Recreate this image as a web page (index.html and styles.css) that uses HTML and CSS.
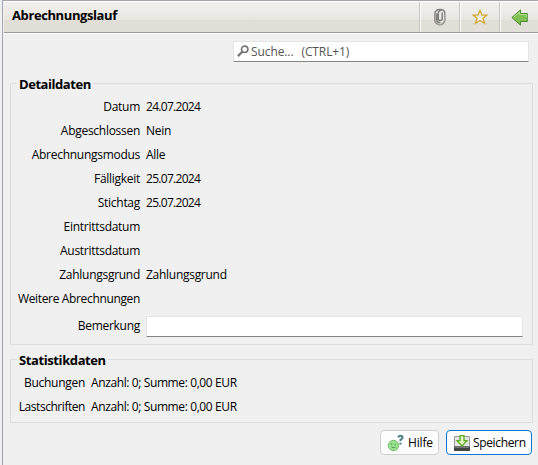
FILE: index.html
```html
<!DOCTYPE html>
<html lang="de">
<head>
<meta charset="utf-8">
<title>Abrechnungslauf</title>
<link rel="stylesheet" href="styles.css">
</head>
<body>
<main class="view">
  <header class="titlebar">
    <h1>Abrechnungslauf</h1>
    <button class="tool" aria-label="Anhang"><svg width="14" height="18" viewBox="0 0 14 18"><g fill="none" stroke-linecap="round"><path d="M9.200 5V10.500a2 2 0 0 1-4 0V6.500M5.200 11.500V5.500a3 3 0 0 1 3-3.200M3.500 2.600Q1.800 3.500 1.800 6v5.500a5 5 0 0 0 10 .5V5.500A4 4 0 0 0 8 1.500H6Q4.500 1.500 3.500 2.600M3.700 6v5.500a3 3 0 0 0 3 3" stroke="#80807c" stroke-width="1.500"/><path d="M2 6v5.500a4.800 4.800 0 0 0 9.600.5V5.500" stroke="#b7b7b2" stroke-width=".6"/></g></svg></button>
    <button class="tool" aria-label="Favorit"><svg width="16" height="16" viewBox="0 0 16 16"><path d="M8 1.500 9.900 6.100h4.900l-3.900 3.300 1.800 5L8 11.500l-4.700 2.900 1.800-5-3.900-3.300h4.900z" fill="#f1eeea" stroke="#d0aa36" stroke-width="1.300"/></svg></button>
    <button class="tool back" aria-label="Zurück"><svg width="17" height="17" viewBox="0 0 17 17"><path d="M.8 8.500 9.500.900V4.500h6.800v8H9.500v3.600z" fill="#80c050" stroke="#4b8b31"/><path d="M2.500 8.300 8.500 3.100V5.500h6.800v3" fill="none" stroke="#b7e095"/></svg></button>
  </header>
  <div class="search">
    <svg width="12" height="13" viewBox="0 0 12 13"><circle cx="7.700" cy="4.300" r="3.200" fill="none" stroke="#777" stroke-width="1.600"/><path d="M5.300 6.800.9 11.100" stroke="#777" stroke-width="2.300"/></svg>
    <span class="s1">Suche...</span><span class="s2">(CTRL+1)</span>
  </div>
  <section class="group details">
    <h2>Detaildaten</h2>
    <dl>
      <dt>Datum</dt><dd class="date">24.07.2024</dd>
      <dt>Abgeschlossen</dt><dd>Nein</dd>
      <dt>Abrechnungsmodus</dt><dd>Alle</dd>
      <dt>Fälligkeit</dt><dd class="date">25.07.2024</dd>
      <dt>Stichtag</dt><dd class="date">25.07.2024</dd>
      <dt>Eintrittsdatum</dt><dd></dd>
      <dt>Austrittsdatum</dt><dd></dd>
      <dt>Zahlungsgrund</dt><dd>Zahlungsgrund</dd>
      <dt class="long">Weitere Abrechnungen</dt><dd></dd>
      <dt class="tall">Bemerkung</dt><dd class="tall"><input class="field" aria-label="Bemerkung"></dd>
    </dl>
  </section>
  <section class="group stats">
    <h2>Statistikdaten</h2>
    <dl>
      <dt>Buchungen</dt><dd>Anzahl: 0; Summe: 0,00 EUR</dd>
      <dt class="narrow">Lastschriften</dt><dd>Anzahl: 0; Summe: 0,00 EUR</dd>
    </dl>
  </section>
  <footer class="actions">
    <button class="btn help"><svg width="18" height="18" viewBox="0 0 18 18"><circle cx="6.500" cy="11.500" r="5.200" fill="#9be48f" stroke="#76b96f"/><circle cx="4.700" cy="10.300" r=".8" fill="#4a954a"/><circle cx="8.300" cy="10.300" r=".8" fill="#4a954a"/><path d="M4.500 13q2 1.300 4 0" fill="none" stroke="#4a954a"/><path d="M11.500 3.500q0-1.800 2-1.800T15.500 3.500q0 1.300-2 2.300V7.300M13.500 8.800v1.700" fill="none" stroke="#4c8589" stroke-width="2.100"/></svg><span>Hilfe</span></button>
    <button class="btn save"><svg width="16" height="16" viewBox="0 0 16 16"><path d="M.5 1.500h15v10H.5z" fill="#e6e6e6" stroke="#999"/><path d="M0 11.500h16V16H0z" fill="#444"/><path d="M1 12.500h14" stroke="#777"/><path d="M6 .700h4v5h3L8 11 3 5.700h3z" fill="#e4f5c4" stroke="#5dab22" stroke-width="1.300"/></svg><span>Speichern</span></button>
  </footer>
</main>
</body>
</html>
```
FILE: styles.css
```css
* { box-sizing: border-box; }
body { margin: 0; background: #f0f0f0; color: #000; font: 12px/16px "Open Sans", "Noto Sans", sans-serif; }
button, input { font: inherit; color: inherit; }
.view { height: 465px; margin-left: 2px; padding-left: 1px; border-left: 1px solid #a5a5af; border-top: 1px solid #a5a5af; overflow: hidden; }
.titlebar { display: flex; height: 32px; border-top: 1px solid #fff; border-bottom: 1px solid #999; background: linear-gradient(#f3f1ef, #e9e6e2 58%, #e1ddd7 60%, #e2dfd9); box-shadow: 0 1px #fff; }
h1 { flex: 1; margin: 0; padding: 5px 0 0 8px; font-size: 13px; line-height: 17px; letter-spacing: -.4px; }
.tool { display: grid; place-items: center; width: 40px; padding: 0; border: 0; border-left: 1px solid #c9c6c2; background: none; box-shadow: inset 1px 0 #faf9f8; }
.tool.back { width: 39px; }
.search { display: flex; align-items: center; width: 296px; height: 21px; margin: 8px 0 0 229px; padding-left: 3px; border: 1px solid #e5e5e5; border-bottom-color: #858585; border-radius: 1px; background: #fff; color: #555; letter-spacing: -.1px; }
.search svg { margin-right: 2px; }
.s2 { margin-left: 8px; }
.group { width: 523px; margin-left: 6px; border: 1px solid #dcdcdc; }
.details { height: 262px; margin-top: 21px; }
.stats { height: 64px; margin-top: 14px; }
h2 { width: max-content; height: 18px; margin: -9px 0 0 6px; padding: 0 2px; background: #f0f0f0; font-size: 13px; line-height: 18px; letter-spacing: -.4px; }
.details h2 { letter-spacing: -.45px; }
dl { display: grid; grid-template-columns: 129px 1fr; column-gap: 6px; margin: 2px 9px 0 0; }
.stats dl { grid-template-columns: 74px 1fr; }
dt, dd { height: 24px; margin: 0; line-height: 24px; white-space: nowrap; letter-spacing: -.28px; }
dt { text-align: right; }
.long { letter-spacing: -.35px; }
.narrow { letter-spacing: -.45px; }
.date { letter-spacing: -.7px; }
.stats dd { letter-spacing: -.39px; }
.tall { height: 29px; line-height: 29px; }
.field { display: block; width: 377px; height: 21px; margin-top: 5px; border: 1px solid #e5e5e5; border-bottom-color: #858585; border-radius: 1px; background: #fff; }
.actions { display: flex; justify-content: flex-end; gap: 7px; margin: 7px 6px 0 0; }
.btn { display: flex; align-items: center; height: 25px; padding: 0 5px 0 7px; border: 1px solid #d0d0d0; border-radius: 4px; background: #fdfdfd; white-space: nowrap; }
.help { width: 59px; padding-left: 6px; letter-spacing: -.15px; }
.save { width: 86px; border-color: #0078d4; letter-spacing: -.35px; }
.btn svg { flex: none; margin-right: 3px; }
```
